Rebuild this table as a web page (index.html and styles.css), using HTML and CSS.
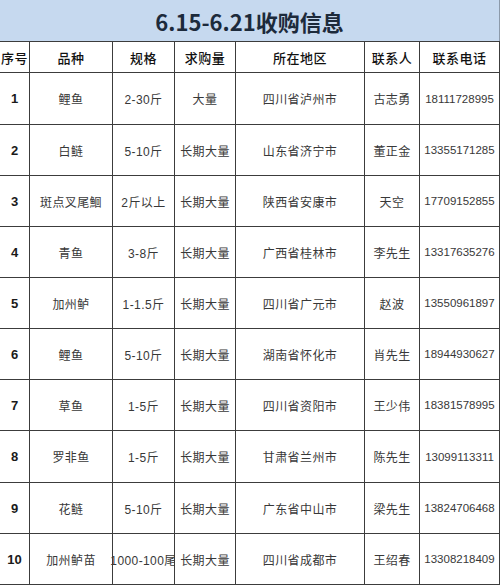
FILE: index.html
```html
<!DOCTYPE html>
<html lang="zh-CN">
<head>
<meta charset="utf-8">
<title>6.15-6.21收购信息</title>
<link rel="stylesheet" href="styles.css">
</head>
<body>
<div class="sheet">
  <div class="title">6.15-6.21收购信息</div>
  <div class="grid">
    <div class="hd">序号</div><div class="hd">品种</div><div class="hd">规格</div><div class="hd">求购量</div><div class="hd">所在地区</div><div class="hd">联系人</div><div class="hd">联系电话</div>

    <div class="no">1</div><div>鲤鱼</div><div>2-30斤</div><div>大量</div><div>四川省泸州市</div><div>古志勇</div><div class="ph">18111728995</div>
    <div class="no">2</div><div>白鲢</div><div>5-10斤</div><div>长期大量</div><div>山东省济宁市</div><div>董正金</div><div class="ph">13355171285</div>
    <div class="no">3</div><div>斑点叉尾鮰</div><div>2斤以上</div><div>长期大量</div><div>陕西省安康市</div><div>天空</div><div class="ph">17709152855</div>
    <div class="no">4</div><div>青鱼</div><div>3-8斤</div><div>长期大量</div><div>广西省桂林市</div><div>李先生</div><div class="ph">13317635276</div>
    <div class="no">5</div><div>加州鲈</div><div>1-1.5斤</div><div>长期大量</div><div>四川省广元市</div><div>赵波</div><div class="ph">13550961897</div>
    <div class="no">6</div><div>鲤鱼</div><div>5-10斤</div><div>长期大量</div><div>湖南省怀化市</div><div>肖先生</div><div class="ph">18944930627</div>
    <div class="no">7</div><div>草鱼</div><div>1-5斤</div><div>长期大量</div><div>四川省资阳市</div><div>王少伟</div><div class="ph">18381578995</div>
    <div class="no">8</div><div>罗非鱼</div><div>1-5斤</div><div>长期大量</div><div>甘肃省兰州市</div><div>陈先生</div><div class="ph">13099113311</div>
    <div class="no">9</div><div>花鲢</div><div>5-10斤</div><div>长期大量</div><div>广东省中山市</div><div>梁先生</div><div class="ph">13824706468</div>
    <div class="no">10</div><div>加州鲈苗</div><div>1000-100尾</div><div>长期大量</div><div>四川省成都市</div><div>王绍春</div><div class="ph">13308218409</div>
  </div>
</div>
</body>
</html>
```

FILE: styles.css
```css
* { box-sizing: border-box; }
html, body { margin: 0; padding: 0; background: #ffffff; }
body {
  font-family: "Liberation Sans", "Noto Sans CJK SC", sans-serif;
  color: #383838;
}
.sheet { width: 500px; }
.title {
  height: 41px;
  background: #c6d9ef;
  border-right: 1px solid #8c9aaa;
  display: flex;
  align-items: center;
  justify-content: center;
  font-family: "Noto Sans CJK SC", "Noto Sans", sans-serif;
  font-weight: 700;
  font-size: 22px;
  color: #1c2a3b;
  padding-top: 1px;
}
.grid {
  display: grid;
  grid-template-columns: 29px 82px 61px 60px 128px 54px 79px;
  grid-template-rows: 30px 51px 50px 50px 50px 50px 50px 50px 51px 50px 50px;
  gap: 1px;
  background: #3c3c3c;
  padding: 1px 1px 1px 0;
  width: 500px;
}
.grid > div {
  background: #ffffff;
  display: flex;
  align-items: center;
  justify-content: center;
  white-space: nowrap;
  font-size: 12px;
  letter-spacing: 0.4px;
}
.grid > .hd {
  font-family: "Noto Sans CJK SC", sans-serif;
  font-weight: 500;
  font-size: 13px;
  color: #111111;
  letter-spacing: 0.5px;
}
.grid > .no {
  font-weight: 700;
  font-size: 13px;
  color: #1a1a1a;
  letter-spacing: 0;
}
.grid > .ph {
  letter-spacing: 0;
  font-size: 11.5px;
}
```
